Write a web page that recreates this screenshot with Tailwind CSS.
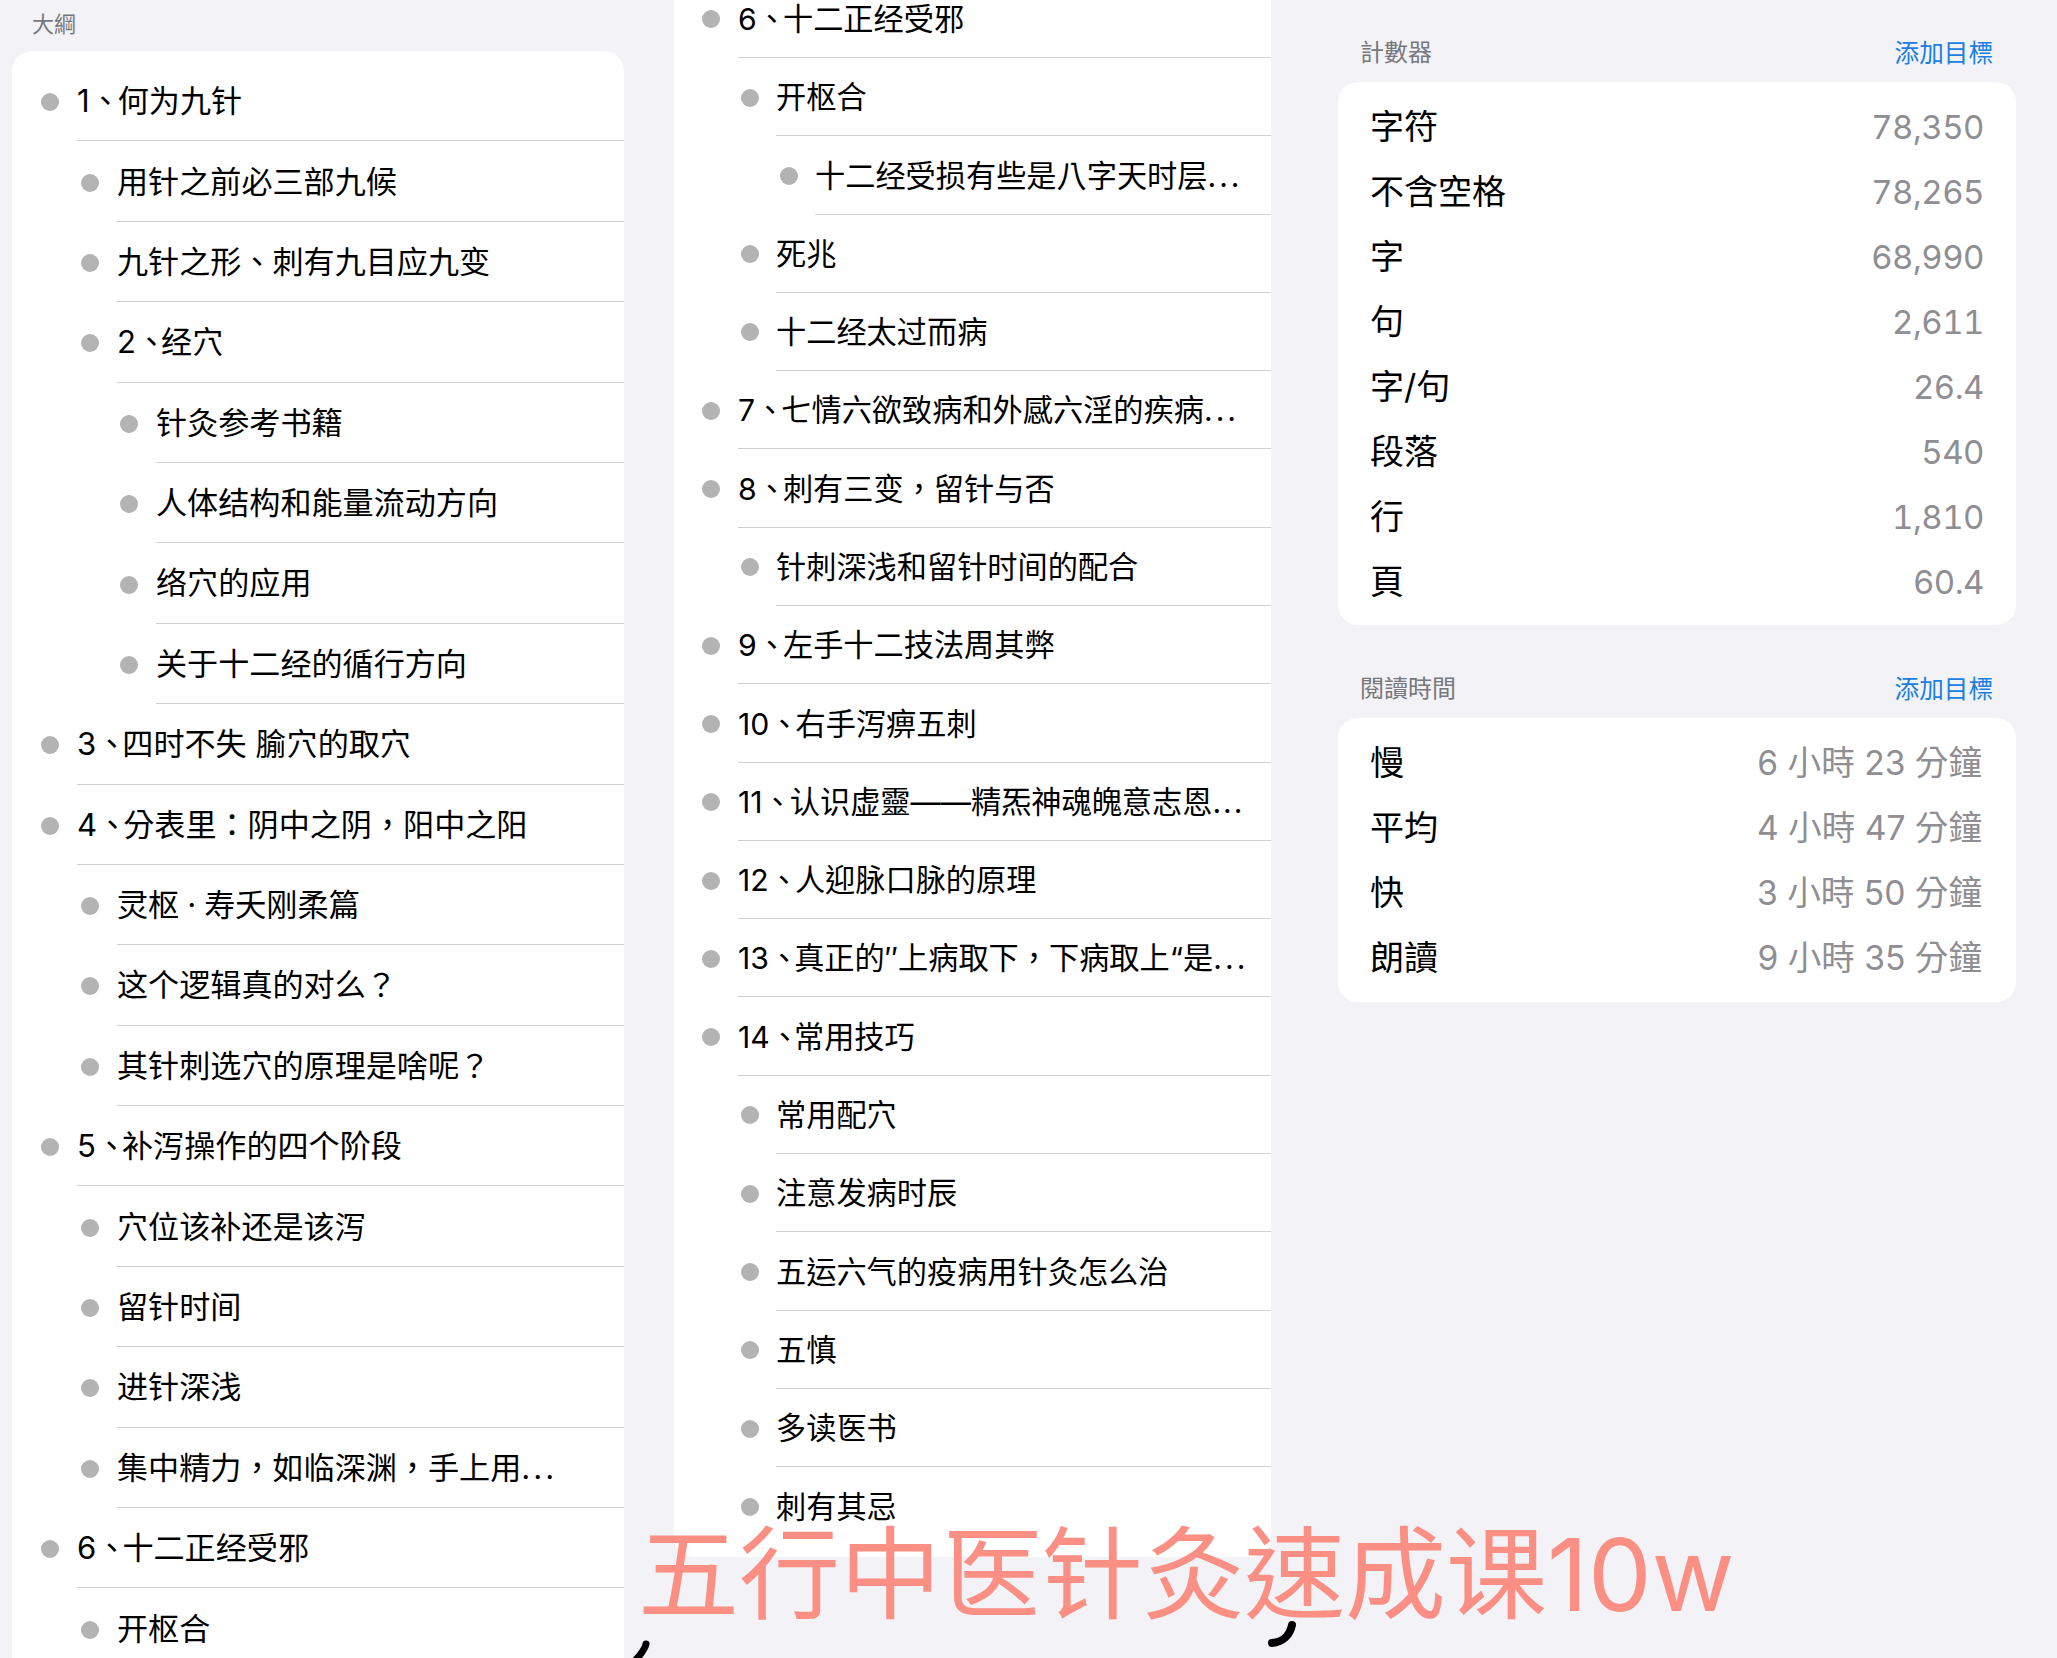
<!DOCTYPE html>
<html lang="zh-TW">
<head>
<meta charset="utf-8">
<script src="https://cdn.jsdelivr.net/npm/@tailwindcss/browser@4"></script>
</head>
<body class="m-0 bg-[#f2f2f7] font-[Inter,'Noto_Sans_CJK_TC',sans-serif] text-black">
<div class="relative flex h-[1658px] w-[2057px] overflow-hidden bg-[#f2f2f7]">

  <section class="w-[674px] shrink-0 pl-3 pr-[50px]">
    <div class="h-[51px] pl-5 pt-[9px] text-[22px] leading-[30px] text-[#77777c]">大綱</div>
    <div class="rounded-t-[20px] bg-white pt-[10px] text-[31.1px]">
      <div class="flex h-[80.4px] items-center pl-[29px]"><span class="mt-[2px] size-[18px] shrink-0 rounded-full bg-[#b3b3b3]"></span><div class="ml-[18px] flex h-full min-w-0 flex-1 items-center border-b-[1.5px] border-[#cfcfd2] pt-[2px] leading-none"><span>1<span class="tracking-[-3px]">、</span>何为九针</span></div></div>
      <div class="flex h-[80.4px] items-center pl-[69px]"><span class="mt-[2px] size-[18px] shrink-0 rounded-full bg-[#b3b3b3]"></span><div class="ml-[18px] flex h-full min-w-0 flex-1 items-center border-b-[1.5px] border-[#cfcfd2] pt-[2px] leading-none">用针之前必三部九候</div></div>
      <div class="flex h-[80.4px] items-center pl-[69px]"><span class="mt-[2px] size-[18px] shrink-0 rounded-full bg-[#b3b3b3]"></span><div class="ml-[18px] flex h-full min-w-0 flex-1 items-center border-b-[1.5px] border-[#cfcfd2] pt-[2px] leading-none">九针之形、刺有九目应九变</div></div>
      <div class="flex h-[80.4px] items-center pl-[69px]"><span class="mt-[2px] size-[18px] shrink-0 rounded-full bg-[#b3b3b3]"></span><div class="ml-[18px] flex h-full min-w-0 flex-1 items-center border-b-[1.5px] border-[#cfcfd2] pt-[2px] leading-none"><span>2<span class="tracking-[-6px]">、</span>经穴</span></div></div>
      <div class="flex h-[80.4px] items-center pl-[108px]"><span class="mt-[2px] size-[18px] shrink-0 rounded-full bg-[#b3b3b3]"></span><div class="ml-[18px] flex h-full min-w-0 flex-1 items-center border-b-[1.5px] border-[#cfcfd2] pt-[2px] leading-none">针灸参考书籍</div></div>
      <div class="flex h-[80.4px] items-center pl-[108px]"><span class="mt-[2px] size-[18px] shrink-0 rounded-full bg-[#b3b3b3]"></span><div class="ml-[18px] flex h-full min-w-0 flex-1 items-center border-b-[1.5px] border-[#cfcfd2] pt-[2px] leading-none">人体结构和能量流动方向</div></div>
      <div class="flex h-[80.4px] items-center pl-[108px]"><span class="mt-[2px] size-[18px] shrink-0 rounded-full bg-[#b3b3b3]"></span><div class="ml-[18px] flex h-full min-w-0 flex-1 items-center border-b-[1.5px] border-[#cfcfd2] pt-[2px] leading-none">络穴的应用</div></div>
      <div class="flex h-[80.4px] items-center pl-[108px]"><span class="mt-[2px] size-[18px] shrink-0 rounded-full bg-[#b3b3b3]"></span><div class="ml-[18px] flex h-full min-w-0 flex-1 items-center border-b-[1.5px] border-[#cfcfd2] pt-[2px] leading-none">关于十二经的循行方向</div></div>
      <div class="flex h-[80.4px] items-center pl-[29px]"><span class="mt-[2px] size-[18px] shrink-0 rounded-full bg-[#b3b3b3]"></span><div class="ml-[18px] flex h-full min-w-0 flex-1 items-center border-b-[1.5px] border-[#cfcfd2] pt-[2px] leading-none"><span>3<span class="tracking-[-5px]">、</span>四时不失 腧穴的取穴</span></div></div>
      <div class="flex h-[80.4px] items-center pl-[29px]"><span class="mt-[2px] size-[18px] shrink-0 rounded-full bg-[#b3b3b3]"></span><div class="ml-[18px] flex h-full min-w-0 flex-1 items-center border-b-[1.5px] border-[#cfcfd2] pt-[2px] leading-none"><span>4<span class="tracking-[-5px]">、</span>分表里：阴中之阴，阳中之阳</span></div></div>
      <div class="flex h-[80.4px] items-center pl-[69px]"><span class="mt-[2px] size-[18px] shrink-0 rounded-full bg-[#b3b3b3]"></span><div class="ml-[18px] flex h-full min-w-0 flex-1 items-center border-b-[1.5px] border-[#cfcfd2] pt-[2px] leading-none"><span>灵枢<span class="px-2">·</span>寿夭刚柔篇</span></div></div>
      <div class="flex h-[80.4px] items-center pl-[69px]"><span class="mt-[2px] size-[18px] shrink-0 rounded-full bg-[#b3b3b3]"></span><div class="ml-[18px] flex h-full min-w-0 flex-1 items-center border-b-[1.5px] border-[#cfcfd2] pt-[2px] leading-none">这个逻辑真的对么？</div></div>
      <div class="flex h-[80.4px] items-center pl-[69px]"><span class="mt-[2px] size-[18px] shrink-0 rounded-full bg-[#b3b3b3]"></span><div class="ml-[18px] flex h-full min-w-0 flex-1 items-center border-b-[1.5px] border-[#cfcfd2] pt-[2px] leading-none">其针刺选穴的原理是啥呢？</div></div>
      <div class="flex h-[80.4px] items-center pl-[29px]"><span class="mt-[2px] size-[18px] shrink-0 rounded-full bg-[#b3b3b3]"></span><div class="ml-[18px] flex h-full min-w-0 flex-1 items-center border-b-[1.5px] border-[#cfcfd2] pt-[2px] leading-none"><span>5<span class="tracking-[-5px]">、</span>补泻操作的四个阶段</span></div></div>
      <div class="flex h-[80.4px] items-center pl-[69px]"><span class="mt-[2px] size-[18px] shrink-0 rounded-full bg-[#b3b3b3]"></span><div class="ml-[18px] flex h-full min-w-0 flex-1 items-center border-b-[1.5px] border-[#cfcfd2] pt-[2px] leading-none">穴位该补还是该泻</div></div>
      <div class="flex h-[80.4px] items-center pl-[69px]"><span class="mt-[2px] size-[18px] shrink-0 rounded-full bg-[#b3b3b3]"></span><div class="ml-[18px] flex h-full min-w-0 flex-1 items-center border-b-[1.5px] border-[#cfcfd2] pt-[2px] leading-none">留针时间</div></div>
      <div class="flex h-[80.4px] items-center pl-[69px]"><span class="mt-[2px] size-[18px] shrink-0 rounded-full bg-[#b3b3b3]"></span><div class="ml-[18px] flex h-full min-w-0 flex-1 items-center border-b-[1.5px] border-[#cfcfd2] pt-[2px] leading-none">进针深浅</div></div>
      <div class="flex h-[80.4px] items-center pl-[69px]"><span class="mt-[2px] size-[18px] shrink-0 rounded-full bg-[#b3b3b3]"></span><div class="ml-[18px] flex h-full min-w-0 flex-1 items-center border-b-[1.5px] border-[#cfcfd2] pt-[2px] leading-none"><span>集中精力，如临深渊，手上用<span class="tracking-[3px]">...</span></span></div></div>
      <div class="flex h-[80.4px] items-center pl-[29px]"><span class="mt-[2px] size-[18px] shrink-0 rounded-full bg-[#b3b3b3]"></span><div class="ml-[18px] flex h-full min-w-0 flex-1 items-center border-b-[1.5px] border-[#cfcfd2] pt-[2px] leading-none"><span>6<span class="tracking-[-5px]">、</span>十二正经受邪</span></div></div>
      <div class="flex h-[80.4px] items-center pl-[69px]"><span class="mt-[2px] size-[18px] shrink-0 rounded-full bg-[#b3b3b3]"></span><div class="ml-[18px] flex h-full min-w-0 flex-1 items-center border-b-[1.5px] border-[#cfcfd2] pt-[2px] leading-none">开枢合</div></div>
    </div>
  </section>

  <section class="-mt-[20.4px] h-[1577.4px] w-[597px] shrink-0 rounded-b-[20px] bg-white text-[30.2px]">
    <div class="flex h-[78.3px] items-center pl-[28px]"><span class="mt-[1px] size-[18px] shrink-0 rounded-full bg-[#b3b3b3]"></span><div class="ml-[18px] flex h-full min-w-0 flex-1 items-center border-b-[1.5px] border-[#cfcfd2] pt-[1.5px] leading-none"><span>6<span class="tracking-[-4px]">、</span>十二正经受邪</span></div></div>
    <div class="flex h-[78.3px] items-center pl-[67px]"><span class="mt-[1px] size-[18px] shrink-0 rounded-full bg-[#b3b3b3]"></span><div class="ml-[17px] flex h-full min-w-0 flex-1 items-center border-b-[1.5px] border-[#cfcfd2] pt-[1.5px] leading-none">开枢合</div></div>
    <div class="flex h-[78.3px] items-center pl-[106px]"><span class="mt-[1px] size-[18px] shrink-0 rounded-full bg-[#b3b3b3]"></span><div class="ml-[17px] flex h-full min-w-0 flex-1 items-center border-b-[1.5px] border-[#cfcfd2] pt-[1.5px] leading-none"><span>十二经受损有些是八字天时层<span class="tracking-[3px]">...</span></span></div></div>
    <div class="flex h-[78.3px] items-center pl-[67px]"><span class="mt-[1px] size-[18px] shrink-0 rounded-full bg-[#b3b3b3]"></span><div class="ml-[17px] flex h-full min-w-0 flex-1 items-center border-b-[1.5px] border-[#cfcfd2] pt-[1.5px] leading-none">死兆</div></div>
    <div class="flex h-[78.3px] items-center pl-[67px]"><span class="mt-[1px] size-[18px] shrink-0 rounded-full bg-[#b3b3b3]"></span><div class="ml-[17px] flex h-full min-w-0 flex-1 items-center border-b-[1.5px] border-[#cfcfd2] pt-[1.5px] leading-none">十二经太过而病</div></div>
    <div class="flex h-[78.3px] items-center pl-[28px]"><span class="mt-[1px] size-[18px] shrink-0 rounded-full bg-[#b3b3b3]"></span><div class="ml-[18px] flex h-full min-w-0 flex-1 items-center border-b-[1.5px] border-[#cfcfd2] pt-[1.5px] leading-none"><span>7<span class="tracking-[-4px]">、</span>七情六欲致病和外感六淫的疾病<span class="tracking-[3px]">...</span></span></div></div>
    <div class="flex h-[78.3px] items-center pl-[28px]"><span class="mt-[1px] size-[18px] shrink-0 rounded-full bg-[#b3b3b3]"></span><div class="ml-[18px] flex h-full min-w-0 flex-1 items-center border-b-[1.5px] border-[#cfcfd2] pt-[1.5px] leading-none"><span>8<span class="tracking-[-4px]">、</span>刺有三变，留针与否</span></div></div>
    <div class="flex h-[78.3px] items-center pl-[67px]"><span class="mt-[1px] size-[18px] shrink-0 rounded-full bg-[#b3b3b3]"></span><div class="ml-[17px] flex h-full min-w-0 flex-1 items-center border-b-[1.5px] border-[#cfcfd2] pt-[1.5px] leading-none">针刺深浅和留针时间的配合</div></div>
    <div class="flex h-[78.3px] items-center pl-[28px]"><span class="mt-[1px] size-[18px] shrink-0 rounded-full bg-[#b3b3b3]"></span><div class="ml-[18px] flex h-full min-w-0 flex-1 items-center border-b-[1.5px] border-[#cfcfd2] pt-[1.5px] leading-none"><span>9<span class="tracking-[-4px]">、</span>左手十二技法周其弊</span></div></div>
    <div class="flex h-[78.3px] items-center pl-[28px]"><span class="mt-[1px] size-[18px] shrink-0 rounded-full bg-[#b3b3b3]"></span><div class="ml-[18px] flex h-full min-w-0 flex-1 items-center border-b-[1.5px] border-[#cfcfd2] pt-[1.5px] leading-none"><span>10<span class="tracking-[-4px]">、</span>右手泻痹五刺</span></div></div>
    <div class="flex h-[78.3px] items-center pl-[28px]"><span class="mt-[1px] size-[18px] shrink-0 rounded-full bg-[#b3b3b3]"></span><div class="ml-[18px] flex h-full min-w-0 flex-1 items-center border-b-[1.5px] border-[#cfcfd2] pt-[1.5px] leading-none"><span>11<span class="tracking-[-3px]">、</span>认识虚靈——精炁神魂魄意志恩<span class="tracking-[2px]">...</span></span></div></div>
    <div class="flex h-[78.3px] items-center pl-[28px]"><span class="mt-[1px] size-[18px] shrink-0 rounded-full bg-[#b3b3b3]"></span><div class="ml-[18px] flex h-full min-w-0 flex-1 items-center border-b-[1.5px] border-[#cfcfd2] pt-[1.5px] leading-none"><span>12<span class="tracking-[-4px]">、</span>人迎脉口脉的原理</span></div></div>
    <div class="flex h-[78.3px] items-center pl-[28px]"><span class="mt-[1px] size-[18px] shrink-0 rounded-full bg-[#b3b3b3]"></span><div class="ml-[18px] flex h-full min-w-0 flex-1 items-center border-b-[1.5px] border-[#cfcfd2] pt-[1.5px] leading-none"><span>13<span class="tracking-[-5px]">、</span>真正的″上病取下，下病取上“是<span class="tracking-[3px]">...</span></span></div></div>
    <div class="flex h-[78.3px] items-center pl-[28px]"><span class="mt-[1px] size-[18px] shrink-0 rounded-full bg-[#b3b3b3]"></span><div class="ml-[18px] flex h-full min-w-0 flex-1 items-center border-b-[1.5px] border-[#cfcfd2] pt-[1.5px] leading-none"><span>14<span class="tracking-[-6px]">、</span>常用技巧</span></div></div>
    <div class="flex h-[78.3px] items-center pl-[67px]"><span class="mt-[1px] size-[18px] shrink-0 rounded-full bg-[#b3b3b3]"></span><div class="ml-[17px] flex h-full min-w-0 flex-1 items-center border-b-[1.5px] border-[#cfcfd2] pt-[1.5px] leading-none">常用配穴</div></div>
    <div class="flex h-[78.3px] items-center pl-[67px]"><span class="mt-[1px] size-[18px] shrink-0 rounded-full bg-[#b3b3b3]"></span><div class="ml-[17px] flex h-full min-w-0 flex-1 items-center border-b-[1.5px] border-[#cfcfd2] pt-[1.5px] leading-none">注意发病时辰</div></div>
    <div class="flex h-[78.3px] items-center pl-[67px]"><span class="mt-[1px] size-[18px] shrink-0 rounded-full bg-[#b3b3b3]"></span><div class="ml-[17px] flex h-full min-w-0 flex-1 items-center border-b-[1.5px] border-[#cfcfd2] pt-[1.5px] leading-none">五运六气的疫病用针灸怎么治</div></div>
    <div class="flex h-[78.3px] items-center pl-[67px]"><span class="mt-[1px] size-[18px] shrink-0 rounded-full bg-[#b3b3b3]"></span><div class="ml-[17px] flex h-full min-w-0 flex-1 items-center border-b-[1.5px] border-[#cfcfd2] pt-[1.5px] leading-none">五慎</div></div>
    <div class="flex h-[78.3px] items-center pl-[67px]"><span class="mt-[1px] size-[18px] shrink-0 rounded-full bg-[#b3b3b3]"></span><div class="ml-[17px] flex h-full min-w-0 flex-1 items-center border-b-[1.5px] border-[#cfcfd2] pt-[1.5px] leading-none">多读医书</div></div>
    <div class="flex h-[78.3px] items-center pl-[67px]"><span class="mt-[1px] size-[18px] shrink-0 rounded-full bg-[#b3b3b3]"></span><div class="ml-[17px] flex h-full min-w-0 flex-1 items-center pt-[1.5px] leading-none">刺有其忌</div></div>
  </section>

  <section class="ml-[67px] w-[678px] shrink-0 pt-[33px]">
    <div class="mb-[9px] flex h-10 items-center justify-between pl-[22px] pr-[23px] leading-none"><span class="text-2xl text-[#77777c]">計數器</span><span class="text-[24.6px] text-[#1a7fe0]">添加目標</span></div>
    <div class="rounded-[20px] bg-white pb-[10.5px] pl-8 pr-8 pt-[12.5px] text-[34px] leading-none">
      <div class="flex h-[65px] items-center justify-between"><span>字符</span><span class="text-[33px] tracking-[-0.5px] text-[#8e8e93] tabular-nums">78,350</span></div>
      <div class="flex h-[65px] items-center justify-between"><span>不含空格</span><span class="text-[33px] tracking-[-0.5px] text-[#8e8e93] tabular-nums">78,265</span></div>
      <div class="flex h-[65px] items-center justify-between"><span>字</span><span class="text-[33px] tracking-[-0.5px] text-[#8e8e93] tabular-nums">68,990</span></div>
      <div class="flex h-[65px] items-center justify-between"><span>句</span><span class="text-[33px] tracking-[-0.5px] text-[#8e8e93] tabular-nums">2,611</span></div>
      <div class="flex h-[65px] items-center justify-between"><span>字/句</span><span class="text-[33px] tracking-[-0.5px] text-[#8e8e93] tabular-nums">26.4</span></div>
      <div class="flex h-[65px] items-center justify-between"><span>段落</span><span class="text-[33px] tracking-[-0.5px] text-[#8e8e93] tabular-nums">540</span></div>
      <div class="flex h-[65px] items-center justify-between"><span>行</span><span class="text-[33px] tracking-[-0.5px] text-[#8e8e93] tabular-nums">1,810</span></div>
      <div class="flex h-[65px] items-center justify-between"><span>頁</span><span class="text-[33px] tracking-[-0.5px] text-[#8e8e93] tabular-nums">60.4</span></div>
    </div>
    <div class="mb-[9px] mt-[44px] flex h-10 items-center justify-between pl-[22px] pr-[23px] leading-none"><span class="text-2xl text-[#77777c]">閱讀時間</span><span class="text-[24.6px] text-[#1a7fe0]">添加目標</span></div>
    <div class="rounded-[20px] bg-white pb-[11px] pl-8 pr-[34px] pt-[12.5px] text-[34px] leading-none">
      <div class="flex h-[65px] items-center justify-between"><span>慢</span><span class="text-[33.6px] text-[#8e8e93]">6 小時 23 分鐘</span></div>
      <div class="flex h-[65px] items-center justify-between"><span>平均</span><span class="text-[33.6px] text-[#8e8e93]">4 小時 47 分鐘</span></div>
      <div class="flex h-[65px] items-center justify-between"><span>快</span><span class="text-[33.6px] text-[#8e8e93]">3 小時 50 分鐘</span></div>
      <div class="flex h-[65px] items-center justify-between"><span>朗讀</span><span class="text-[33.6px] text-[#8e8e93]">9 小時 35 分鐘</span></div>
    </div>
  </section>

  <div class="pointer-events-none absolute left-[638px] top-[1524px] whitespace-nowrap text-[101px] font-normal leading-none text-[#fb8f84]">五行中医针灸速成课10w</div>

  <svg class="pointer-events-none absolute left-0 top-0" width="2057" height="1658" fill="none" stroke="#000" stroke-linecap="round">
    <path d="M646 1644 C645 1650 640 1655 634 1662" stroke-width="7"/>
    <path d="M1292 1625 C1290 1635 1283 1642 1272 1643" stroke-width="8"/>
  </svg>
</div>
</body>
</html>
